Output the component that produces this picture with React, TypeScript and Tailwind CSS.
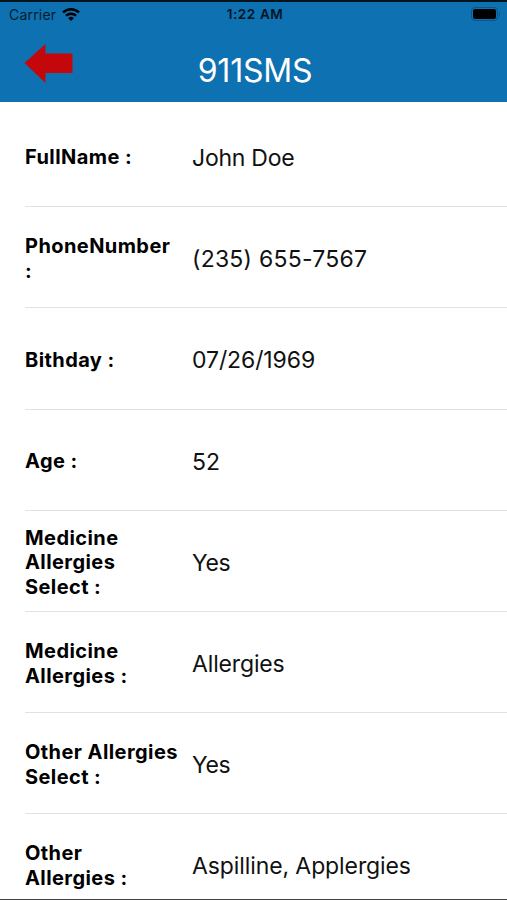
const rows = [
  { label: ["FullName :"], value: "John Doe", tracking: "tracking-[-0.25px]" },
  { label: ["PhoneNumber", ":"], value: "(235) 655-7567", tracking: "tracking-[0.25px]" },
  { label: ["Bithday :"], value: "07/26/1969", tracking: "tracking-[-0.1px]" },
  { label: ["Age :"], value: "52", tracking: "tracking-normal" },
  { label: ["Medicine", "Allergies", "Select :"], value: "Yes", tracking: "tracking-[-0.4px]" },
  { label: ["Medicine", "Allergies :"], value: "Allergies", tracking: "tracking-[-0.15px]" },
  { label: ["Other Allergies", "Select :"], value: "Yes", tracking: "tracking-[-0.4px]" },
  { label: ["Other", "Allergies :"], value: "Aspilline, Applergies", tracking: "tracking-[-0.1px]" },
];

export default function App() {
  return (
    <div className="flex h-[900px] w-[507px] flex-col overflow-hidden border-b border-[#444] bg-white font-['Inter',sans-serif] text-black">
      <header className="h-[102px] shrink-0 border-t-2 border-[#03131d] bg-[#0e71b1]">
        <div className="grid h-[25px] grid-cols-[1fr_80px_1fr] items-center pl-[9px] pr-[6px]">
          <div className="flex items-center gap-[6px] pb-px text-[#051c2c]">
            <span className="text-[14px] tracking-[0.2px]">Carrier</span>
            <svg width="18" height="13" viewBox="0 0 18 13" fill="none" stroke="#000" strokeWidth="2.4">
              <path d="M1 4.5a11.5 11.5 0 0 1 16 0M4 7.7a7.2 7.2 0 0 1 10 0" />
              <path d="M9 13L6.2 10.2a4 4 0 0 1 5.6 0Z" fill="#000" stroke="none" />
            </svg>
          </div>
          <div className="whitespace-nowrap text-center text-[13.5px] font-semibold tracking-[0.6px] text-[#021522]">1:22 AM</div>
          <div className="flex justify-end pb-px">
            <svg width="31" height="14" viewBox="0 0 31 14">
              <rect x="1.5" y="0.5" width="26" height="13" rx="3.5" fill="none" stroke="#0a5688" />
              <rect x="3" y="2" width="23" height="10" rx="2.2" />
              <path d="M29 4.5q2 2.5 0 5z" fill="#0a5688" />
            </svg>
          </div>
        </div>
        <div className="grid h-[75px] grid-cols-[73px_1fr_70px]">
          <svg className="ml-[24px] mt-[17px]" width="49" height="39" viewBox="0 0 49 39">
            <path d="M0.5 19L21.5 0V9.5H48.5V29H21.5V39Z" fill="#c4070b" />
          </svg>
          <h1 className="pt-[22px] text-center text-[32px] leading-[44px] tracking-[-0.2px] text-white">911SMS</h1>
        </div>
      </header>
      <main className="pt-[4px]">
        {rows.map((row, i) => (
          <div key={i} className="ml-[25px] flex h-[101.2px] items-center border-b border-[#e2e2e2]">
            <div className="w-[168px] whitespace-nowrap pt-[3px] text-[20px] font-bold leading-[24.5px] tracking-[0.42px]">
              {row.label.map((line) => (
                <div key={line}>{line}</div>
              ))}
            </div>
            <div className={`-ml-px pt-[4px] text-[23px] leading-[30px] text-[#111] ${row.tracking}`}>{row.value}</div>
          </div>
        ))}
      </main>
    </div>
  );
}
